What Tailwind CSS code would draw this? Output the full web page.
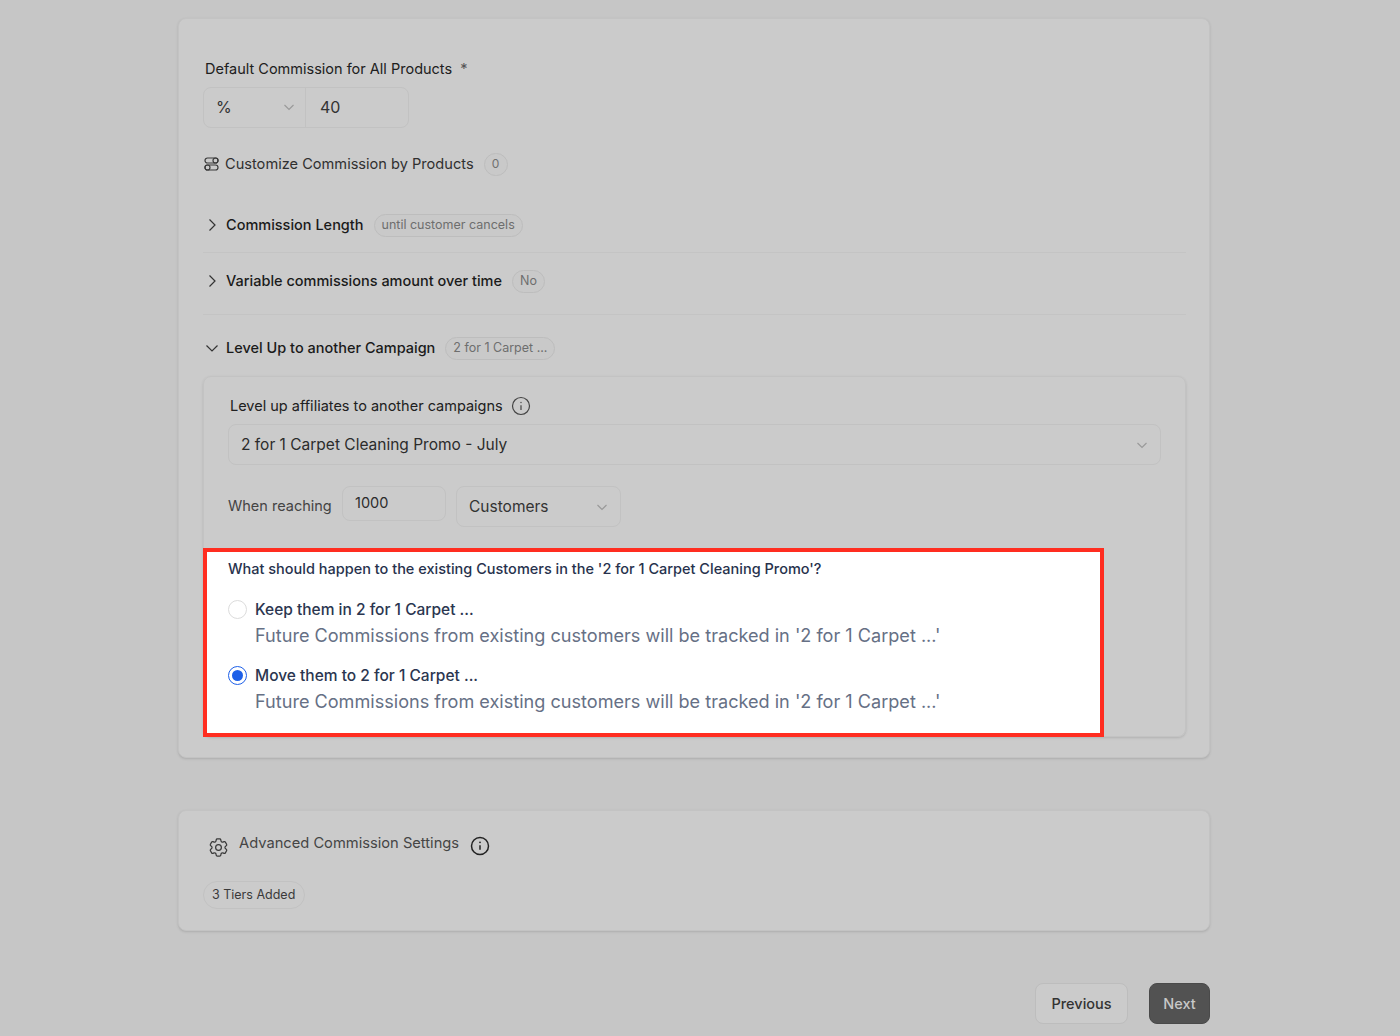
<!DOCTYPE html>
<html lang="en">

<head>
     <meta charset="UTF-8">
     <title>Commission settings</title>
     <script src="https://cdn.jsdelivr.net/npm/@tailwindcss/browser@4"></script>
</head>

<body class="bg-[#c6c6c6] h-[1036px] overflow-hidden font-['Inter',sans-serif] text-[#1f1f1f]">

     <main class="w-[1032px] ml-[178px] pt-[18px]">

          <!-- commission card -->
          <section class="h-[740px] rounded-lg border border-[#c3c3c3] bg-[#cbcbcb] shadow-sm pl-6 pr-[23px] pt-[40px] flex flex-col">
               <div class="flex items-center h-5 pl-[2px] text-[14.5px] text-[#202020]">
                    Default Commission for All Products<span class="ml-2 text-[#555]">*</span>
               </div>

               <!-- type and amount -->
               <div class="flex mt-[8px] w-[206px] h-[41px] rounded-lg border border-[#c2c2c2] text-[16px] text-[#333]">
                    <div class="w-[102px] flex items-center justify-between pl-[12px] pr-[10px] pb-[1px] border-r border-[#c2c2c2]">
                         %
                         <svg class="w-3 h-3 text-[#9a9a9a]" viewBox="0 0 12 12" fill="none" stroke="currentColor" stroke-width="1.2"><path d="M1.5 4l4.5 4.500L10.500 4"/></svg>
                    </div>
                    <div class="flex items-center pl-[14px] pb-[1px]">40</div>
               </div>

               <div class="flex items-center h-6 mt-[24px] pl-[1px] text-[14.6px] text-[#303030]">
                    <svg class="w-[15px] h-4 mr-[6px] text-[#3a3a3a]" viewBox="0 0 15 16" fill="none" stroke="currentColor" stroke-width="1.2">
                         <rect x="1" y="2" width="13" height="5" rx="2.500"/>
                         <circle cx="11.500" cy="4.500" r="2.500"/>
                         <rect x="1" y="9" width="13" height="5" rx="2.500"/>
                         <circle cx="3.500" cy="11.500" r="2.500"/>
                    </svg>
                    <span class="mt-[2px]">Customize Commission by Products</span>
                    <span class="ml-[10px] w-6 h-[23px] flex items-center justify-center rounded-full border border-[#bdbdbd] bg-[#c9c9c9] text-[12px] text-[#707070]">0</span>
               </div>

               <!-- commission length -->
               <div class="flex items-center h-[23px] mt-[37px] text-[14.5px] font-[450] text-[#1a1a1a]">
                    <svg class="w-4 h-4 ml-[1px] mr-[6px] text-[#333]" viewBox="0 0 16 16" fill="none" stroke="currentColor" stroke-width="1.2"><path d="M5.500 2.500L11 8l-5.500 5.500"/></svg>
                    Commission Length
                    <span class="ml-[10px] mt-[2px] h-[23px] px-[7px] flex items-center rounded-full border border-[#bdbdbd] bg-[#c9c9c9] text-[12.500px] font-normal text-[#6e6e6e]">until customer cancels</span>
               </div>
               <div class="h-px mt-[16px] bg-[#c4c4c4]"></div>

               <div class="flex items-center h-[23px] mt-[16px] text-[14.5px] font-[450] text-[#1a1a1a]">
                    <svg class="w-4 h-4 ml-[1px] mr-[6px] text-[#333]" viewBox="0 0 16 16" fill="none" stroke="currentColor" stroke-width="1.2"><path d="M5.500 2.500L11 8l-5.500 5.500"/></svg>
                    Variable commissions amount over time
                    <span class="ml-[10px] mt-[1px] h-[23px] px-[7px] flex items-center rounded-full border border-[#bdbdbd] bg-[#c9c9c9] text-[12.500px] font-normal text-[#6e6e6e]">No</span>
               </div>
               <div class="h-px mt-[22px] bg-[#c4c4c4]"></div>

               <div class="flex items-center h-[23px] mt-[21px] text-[14.5px] font-[450] text-[#1a1a1a]">
                    <svg class="w-4 h-4 ml-[1px] mr-[6px] text-[#333]" viewBox="0 0 16 16" fill="none" stroke="currentColor" stroke-width="1.2"><path d="M2.500 5.500L8 11l5.500-5.500"/></svg>
                    Level Up to another Campaign
                    <span class="ml-[10px] mt-[1px] h-[23px] px-[7px] flex items-center rounded-full border border-[#bdbdbd] bg-[#c9c9c9] text-[12.500px] font-normal text-[#6e6e6e]">2 for 1 Carpet ...</span>
               </div>

               <!-- level up panel -->
               <div class="mt-[17px] h-[361px] rounded-lg border border-[#c3c3c3] shadow-sm">
                    <div class="flex items-center h-5 mt-[19px] ml-[26px] text-[14.5px] text-[#202020]">
                         Level up affiliates to another campaigns
                         <svg class="w-5 h-5 ml-2 text-[#444]" viewBox="0 0 20 20" fill="none" stroke="currentColor" stroke-width="1.2">
                              <circle cx="10" cy="10" r="8.500"/>
                              <path d="M10 9.200v4.800"/>
                              <circle cx="10" cy="6.500" r="0.700" fill="currentColor" stroke="none"/>
                         </svg>
                    </div>
                    <div class="flex items-center justify-between h-[41px] mt-[8px] mx-6 pl-3 pr-3 rounded-lg border border-[#c2c2c2] text-[15.5px] text-[#2c2c2c]">
                         2 for 1 Carpet Cleaning Promo - July
                         <svg class="w-3 h-3 text-[#9a9a9a]" viewBox="0 0 12 12" fill="none" stroke="currentColor" stroke-width="1.2"><path d="M1.500 4l4.500 4.500L10.500 4"/></svg>
                    </div>
                    <div class="flex items-start mt-[21px] ml-6">
                         <span class="mt-[11px] w-[114px] text-[14.5px] leading-[18px] text-[#444]">When reaching</span>
                         <div class="flex items-center w-[104px] h-[35px] pl-3 pb-[1px] rounded-lg border border-[#c2c2c2] text-[14.5px] text-[#2c2c2c]">1000</div>
                         <div class="flex items-center justify-between w-[165px] h-[41px] ml-[10px] pl-3 pr-3 rounded-lg border border-[#c2c2c2] text-[15.5px] text-[#333]">
                              Customers
                              <svg class="w-3 h-3 text-[#9a9a9a]" viewBox="0 0 12 12" fill="none" stroke="currentColor" stroke-width="1.2"><path d="M1.500 4l4.500 4.500L10.500 4"/></svg>
                         </div>
                    </div>

                    <!-- highlighted question -->
                    <div class="w-[901px] h-[189px] mt-[21px] -ml-px bg-white border-4 border-[#ff2d20] pl-[21px] pt-[7px]">
                         <p class="h-5 flex items-center text-[14.5px] font-[450] text-[#27324d]">What should happen to the existing Customers in the '2 for 1 Carpet Cleaning Promo'?</p>
                         <div class="flex mt-[20px]">
                              <span class="w-[19px] h-[19px] mt-[1px] rounded-full border border-[#dcdcdc] bg-white"></span>
                              <div class="ml-2">
                                   <p class="h-[21px] flex items-center text-[15.5px] font-[450] text-[#2b3650]">Keep them in 2 for 1 Carpet ...</p>
                                   <p class="mt-[3px] h-[26px] flex items-center text-[18.100px] text-[#667085]">Future Commissions from existing customers will be tracked in '2 for 1 Carpet ...'</p>
                              </div>
                         </div>
                         <div class="flex mt-[16px]">
                              <span class="w-[19px] h-[19px] mt-[1px] flex items-center justify-center rounded-full border border-[#1d5fe8] bg-white">
                                   <span class="w-[11px] h-[11px] rounded-full bg-[#1d5fe8]"></span>
                              </span>
                              <div class="ml-2">
                                   <p class="h-[21px] flex items-center text-[15.5px] font-[450] text-[#2b3650]">Move them to 2 for 1 Carpet ...</p>
                                   <p class="mt-[3px] h-[26px] flex items-center text-[18.100px] text-[#667085]">Future Commissions from existing customers will be tracked in '2 for 1 Carpet ...'</p>
                              </div>
                         </div>
                    </div>
               </div>
          </section>

          <!-- advanced settings -->
          <section class="h-[121px] mt-[52px] rounded-lg border border-[#c3c3c3] bg-[#cbcbcb] shadow-sm px-6">
               <div class="flex items-start h-[40px] pt-[22px] text-[14.7px] text-[#454545]">
                    <svg class="w-[23px] h-[23px] ml-[4px] mt-[3px] shrink-0 text-[#3a3a3a]" viewBox="0 0 24 24" fill="none" stroke="currentColor" stroke-width="1.300" stroke-linecap="round" stroke-linejoin="round">
                         <path d="M9.594 3.940c.090-.542.560-.940 1.110-.940h2.593c.550 0 1.020.398 1.110.940l.213 1.281c.063.374.313.686.645.870.074.040.147.083.220.127.324.196.720.257 1.075.124l1.217-.456a1.125 1.125 0 011.370.490l1.296 2.247a1.125 1.125 0 01-.260 1.431l-1.003.827c-.293.240-.438.613-.431.992a6.759 6.759 0 010 .255c-.007.378.138.750.430.990l1.005.828c.424.350.534.954.260 1.430l-1.298 2.247a1.125 1.125 0 01-1.369.491l-1.217-.456c-.355-.133-.750-.072-1.076.124a6.570 6.570 0 01-.220.128c-.331.183-.581.495-.644.869l-.213 1.280c-.090.543-.560.941-1.110.941h-2.594c-.550 0-1.020-.398-1.110-.940l-.213-1.281c-.062-.374-.312-.686-.644-.870a6.520 6.520 0 01-.220-.127c-.325-.196-.720-.257-1.076-.124l-1.217.456a1.125 1.125 0 01-1.369-.490l-1.297-2.247a1.125 1.125 0 01.260-1.431l1.004-.827c.292-.240.437-.613.430-.992a6.932 6.932 0 010-.255c.007-.378-.138-.750-.430-.990l-1.004-.828a1.125 1.125 0 01-.260-1.430l1.297-2.247a1.125 1.125 0 011.370-.491l1.216.456c.356.133.751.072 1.076-.124.072-.044.146-.087.220-.128.332-.183.582-.495.644-.869l.214-1.281z"/>
                         <circle cx="12" cy="12" r="3"/>
                    </svg>
                    <span class="ml-[9px] leading-5">Advanced Commission Settings</span>
                    <svg class="w-5 h-5 ml-[11px] mt-[3px] text-[#222]" viewBox="0 0 20 20" fill="none" stroke="currentColor" stroke-width="1.500">
                         <circle cx="10" cy="10" r="8.500"/>
                         <path d="M10 9.200v4.600"/>
                         <circle cx="10" cy="6.300" r="0.900" fill="currentColor" stroke="none"/>
                    </svg>
               </div>
               <span class="inline-flex items-center h-[28px] mt-[30px] pl-[8px] w-[102px] whitespace-nowrap rounded-full border border-[#c2c2c2] text-[12.500px] text-[#3a3a3a]">3 Tiers Added</span>
          </section>

          <!-- navigation -->
          <div class="flex justify-end gap-[21px] mt-[52px]">
               <button class="w-[93px] h-[41px] rounded-lg border border-[#bdbdbd] bg-[#cbcbcb] text-[14.5px] font-[450] text-[#333]">Previous</button>
               <button class="w-[61px] h-[41px] rounded-lg border border-[#4a4a4a] bg-[#525252] text-[14.5px] font-[450] text-[#c8c8c8]">Next</button>
          </div>
     </main>

</body>

</html>
